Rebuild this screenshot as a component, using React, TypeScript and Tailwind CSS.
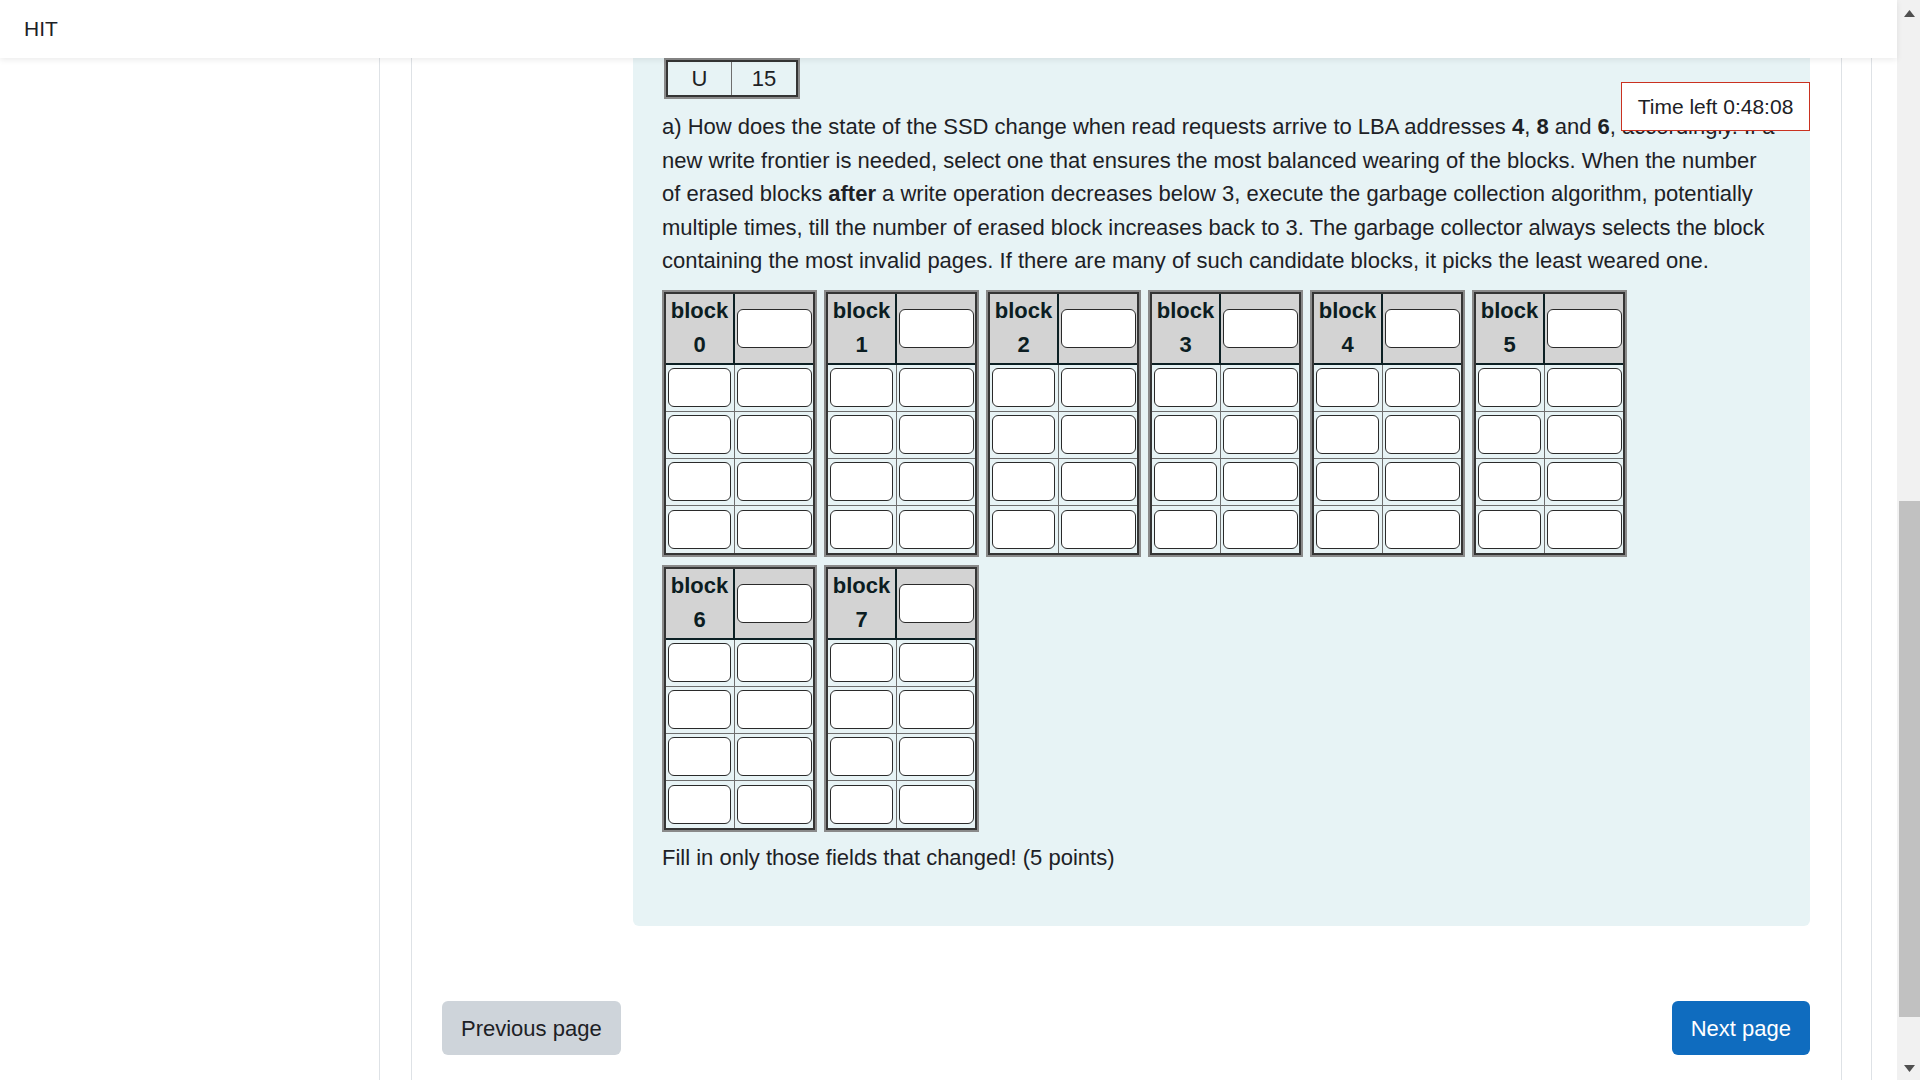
import React from 'react';

const Field: React.FC<{ w: string }> = ({ w }) => (
    <input
        type="text"
        className={`${w} h-[39px] rounded-[6px] border-[1.5px] border-[#2a2a2a] bg-white outline-none`}
    />
);

const BlockTable: React.FC<{ n: number }> = ({ n }) => (
    <div className="w-[155px] border-2 border-[#8a8a8a]">
        <div className="border-2 border-[#353535]">
            <div className="flex h-[71px] border-b-2 border-[#0c2024] bg-[#d3d3d3]">
                <div className="flex w-[69px] flex-col items-center justify-center border-r-2 border-[#0c2024] text-[22px] font-bold leading-[34px] text-[#0c1d22]">
                    <span>block</span>
                    <span>{n}</span>
                </div>
                <div className="flex w-[78px] items-center justify-center pl-[1px]">
                    <Field w="w-[75px]" />
                </div>
            </div>
            {[0, 1, 2, 3].map((r) => (
                <div key={r} className={`flex h-[47px] ${r < 3 ? 'border-b border-[#6e6e6e]' : ''}`}>
                    <div className="flex w-[69px] items-center justify-center border-r border-[#6e6e6e] pr-[1px]">
                        <Field w="w-[63px]" />
                    </div>
                    <div className="flex w-[78px] items-center justify-center pl-[1px]">
                        <Field w="w-[75px]" />
                    </div>
                </div>
            ))}
        </div>
    </div>
);

const App: React.FC = () => {
    return (
        <div className="flex h-[1080px] w-[1920px] overflow-hidden bg-white font-['Liberation_Sans',Arial,sans-serif] text-[#1d2125]">
            <div className="relative flex w-[1897px] flex-col">
                {/* top bar */}
                <header className="relative z-10 flex h-[58px] items-center bg-white pl-[24px] shadow-[0_2px_6px_rgba(0,0,0,0.08)]">
                    <span className="text-[21px]">HIT</span>
                </header>

                <div className="flex flex-1">
                    <div className="w-[380px] border-r border-[#dee2e6]" />
                    <div className="w-[32px] border-r border-[#dee2e6]" />

                    <main className="w-[1430px] border-r border-[#dee2e6] pl-[30px] pr-[31px]">
                        <div className="ml-[191px] rounded-b-[6px] bg-[#e7f3f5] pb-[52px] pl-[29px] pr-[32px]">
                            {/* state table */}
                            <div className="ml-[2px] inline-block border-2 border-[#8a8a8a] align-top">
                                <div className="flex h-[37px] border-2 border-[#353535] text-[22px] leading-[33px]">
                                    <div className="flex w-[64px] items-center justify-center border-r border-[#6e6e6e]">U</div>
                                    <div className="flex w-[64px] items-center justify-center">15</div>
                                </div>
                            </div>

                            <p className="mt-[11px] text-[22px] leading-[33.5px]">
                                a) How does the state of the SSD change when read requests arrive to LBA addresses <b>4</b>, <b>8</b> and <b>6</b>, accordingly. If a new write frontier is needed, select one that ensures the most balanced wearing of the blocks. When the number of erased blocks <b>after</b> a write operation decreases below 3, execute the garbage collection algorithm, potentially multiple times, till the number of erased block increases back to 3. The garbage collector always selects the block containing the most invalid pages. If there are many of such candidate blocks, it picks the least weared one.
                            </p>

                            <div className="mt-[12px] flex w-[1000px] flex-wrap gap-x-[7px] gap-y-[8px]">
                                {[0, 1, 2, 3, 4, 5, 6, 7].map((n) => (
                                    <BlockTable key={n} n={n} />
                                ))}
                            </div>

                            <p className="mt-[9px] text-[22px] leading-[33.5px]">Fill in only those fields that changed! (5 points)</p>
                        </div>

                        <div className="mt-[75px] flex justify-between">
                            <button className="h-[54px] rounded-[6px] bg-[#ced4da] px-[19px] text-[22px] text-[#1d2125]">Previous page</button>
                            <button className="h-[54px] rounded-[6px] bg-[#0f6cbf] px-[19px] text-[22px] text-white">Next page</button>
                        </div>
                    </main>

                    <div className="w-[30px] border-r border-[#dee2e6]" />
                    <div className="flex-1" />
                </div>

                {/* timer */}
                <div className="absolute left-[1621px] top-[82px] z-20 flex h-[49px] w-[189px] items-center justify-center border border-[#ca3120] bg-white text-[21px]">
                    Time left 0:48:08
                </div>
            </div>

            {/* scrollbar */}
            <div className="relative w-[23px] bg-[#f1f1f1]">
                <svg className="absolute left-[7px] top-[10px]" width="11" height="7" viewBox="0 0 11 7">
                    <path d="M5.5 0 L11 7 L0 7 Z" fill="#505050" />
                </svg>
                <div className="absolute left-[2px] right-0 top-[501px] h-[516px] bg-[#c1c1c1]" />
                <svg className="absolute bottom-[8px] left-[7px]" width="11" height="7" viewBox="0 0 11 7">
                    <path d="M0 0 L11 0 L5.5 7 Z" fill="#505050" />
                </svg>
            </div>
        </div>
    );
};

export default App;
